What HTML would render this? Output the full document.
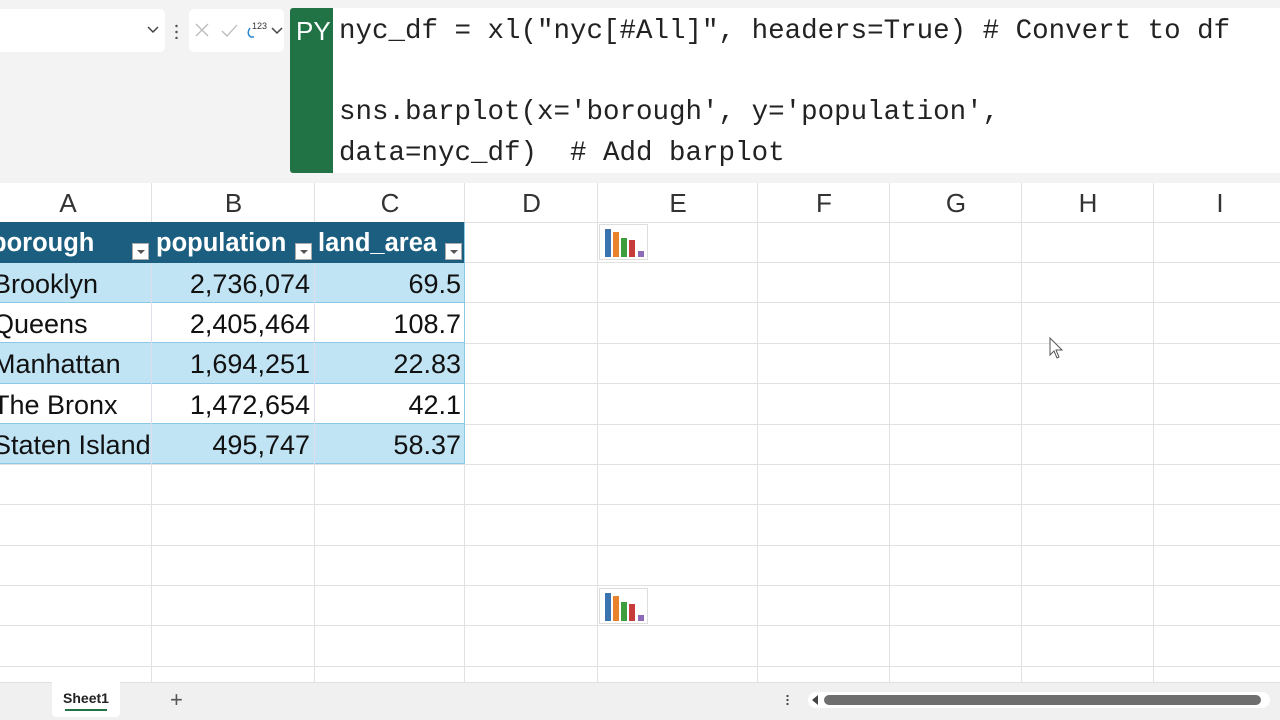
<!DOCTYPE html>
<html><head><meta charset="utf-8"><style>
*{margin:0;padding:0;box-sizing:border-box}
body{width:1280px;height:720px;overflow:hidden;background:#fff;font-family:"Liberation Sans",sans-serif;position:relative}
.top{position:absolute;left:0;top:0;width:1280px;height:183px;background:#f3f3f3}
.abs{position:absolute}
.code{position:absolute;left:333px;top:8px;width:947px;height:165px;background:#fff;font-family:"Liberation Mono",monospace;font-size:27.5px;color:#222;padding:4px 0 0 6px;line-height:40.5px;white-space:pre}
.hdr{position:absolute;top:183px;height:39px;font-size:26px;color:#333;text-align:center;line-height:40px}
.vl{position:absolute;top:183px;height:499px;width:1px;background:#e1e1e1}
.hl{position:absolute;left:0;width:1280px;height:1px;background:#e1e1e1}
.cell{position:absolute;height:40px;font-size:27px;line-height:41px;color:#111;white-space:nowrap;overflow:hidden}
.dd{position:absolute;width:17px;height:17px;background:#fff;border:1px solid #aaa;top:243px}
.dd:after{content:"";position:absolute;left:4px;top:6px;border-left:4px solid transparent;border-right:4px solid transparent;border-top:4px solid #555}
</style></head><body>
<div class="top"></div>
<div class="abs" style="left:0;top:9px;width:165px;height:43px;background:#fff;border-radius:0 5px 5px 0"></div>
<svg class="abs" style="left:146px;top:25px" width="14" height="10"><path d="M2 2 L7 7 L12 2" fill="none" stroke="#444" stroke-width="1.5"/></svg>
<div class="abs" style="left:175px;top:23px;width:3px;height:16px;background:radial-gradient(circle,#555 1px,transparent 1.5px) 0 0/3px 6px"></div>
<div class="abs" style="left:189px;top:9px;width:95px;height:43px;background:#fff;border-radius:5px"></div>
<svg class="abs" style="left:192px;top:20px" width="95" height="24"><path d="M4 4 L16 16 M16 4 L4 16" stroke="#bbb" stroke-width="1.3"/><path d="M30 11 L35 16 L45 5" fill="none" stroke="#bbb" stroke-width="1.3"/><path d="M58 8 Q54 14 59 17 L62 17" fill="none" stroke="#2a86d1" stroke-width="1.5"/><text x="60" y="9" font-size="9" fill="#333" font-family="Liberation Sans">123</text><path d="M80 8 L85 13 L90 8" fill="none" stroke="#444" stroke-width="1.5"/></svg>
<div class="abs" style="left:290px;top:8px;width:43px;height:165px;background:#217346;border-radius:3px 0 0 3px;color:#fff;font-size:26px;padding:8px 0 0 6px">PY</div>
<div class="code">nyc_df = xl("nyc[#All]", headers=True) # Convert to df

sns.barplot(x='borough', y='population',
data=nyc_df)  # Add barplot</div>

<div class="hdr" style="left:0;width:136px">A</div>
<div class="hdr" style="left:152px;width:163px">B</div>
<div class="hdr" style="left:315px;width:150px">C</div>
<div class="hdr" style="left:465px;width:133px">D</div>
<div class="hdr" style="left:598px;width:160px">E</div>
<div class="hdr" style="left:758px;width:132px">F</div>
<div class="hdr" style="left:890px;width:132px">G</div>
<div class="hdr" style="left:1022px;width:132px">H</div>
<div class="hdr" style="left:1154px;width:132px">I</div>

<div class="vl" style="left:151px"></div><div class="vl" style="left:314px"></div><div class="vl" style="left:464px"></div><div class="vl" style="left:597px"></div><div class="vl" style="left:757px"></div><div class="vl" style="left:889px"></div><div class="vl" style="left:1021px"></div><div class="vl" style="left:1153px"></div>
<div class="hl" style="top:222px"></div><div class="hl" style="top:262px"></div><div class="hl" style="top:302px"></div><div class="hl" style="top:343px"></div><div class="hl" style="top:383px"></div><div class="hl" style="top:424px"></div><div class="hl" style="top:464px"></div><div class="hl" style="top:504px"></div><div class="hl" style="top:545px"></div><div class="hl" style="top:585px"></div><div class="hl" style="top:625px"></div><div class="hl" style="top:666px"></div>

<div class="abs" style="left:0;top:222px;width:465px;height:41px;background:#1b5e80"></div>
<div class="abs" style="left:0;top:263px;width:465px;height:40px;background:#c1e4f5;border-bottom:1px solid #8cc7e6"></div>
<div class="abs" style="left:0;top:303px;width:465px;height:40px;background:#fff;border-bottom:1px solid #8cc7e6"></div>
<div class="abs" style="left:0;top:343px;width:465px;height:41px;background:#c1e4f5;border-bottom:1px solid #8cc7e6"></div>
<div class="abs" style="left:0;top:384px;width:465px;height:40px;background:#fff;border-bottom:1px solid #8cc7e6"></div>
<div class="abs" style="left:0;top:424px;width:465px;height:40px;background:#c1e4f5;border-bottom:1px solid #8cc7e6"></div>
<div class="abs" style="left:464px;top:222px;width:1px;height:242px;background:#8cc7e6"></div>
<div class="abs" style="left:151px;top:263px;width:1px;height:201px;background:#dde"></div><div class="abs" style="left:314px;top:263px;width:1px;height:201px;background:#dde"></div>
<div class="cell" style="left:-9px;top:223px;color:#fff;font-weight:bold;font-size:25.5px">borough</div>
<div class="cell" style="left:156px;top:223px;color:#fff;font-weight:bold;font-size:25.5px">population</div>
<div class="cell" style="left:318px;top:223px;color:#fff;font-weight:bold;font-size:25.5px">land_area</div>
<div class="dd" style="left:132px"></div><div class="dd" style="left:295px"></div><div class="dd" style="left:445px"></div>
<div class="cell" style="left:-7px;top:264px">Brooklyn</div><div class="cell" style="left:152px;width:158px;text-align:right;top:264px">2,736,074</div><div class="cell" style="left:315px;width:146px;text-align:right;top:264px">69.5</div>
<div class="cell" style="left:-7px;top:304px">Queens</div><div class="cell" style="left:152px;width:158px;text-align:right;top:304px">2,405,464</div><div class="cell" style="left:315px;width:146px;text-align:right;top:304px">108.7</div>
<div class="cell" style="left:-7px;top:344px">Manhattan</div><div class="cell" style="left:152px;width:158px;text-align:right;top:344px">1,694,251</div><div class="cell" style="left:315px;width:146px;text-align:right;top:344px">22.83</div>
<div class="cell" style="left:-7px;top:385px">The Bronx</div><div class="cell" style="left:152px;width:158px;text-align:right;top:385px">1,472,654</div><div class="cell" style="left:315px;width:146px;text-align:right;top:385px">42.1</div>
<div class="cell" style="left:-7px;top:425px">Staten Island</div><div class="cell" style="left:152px;width:158px;text-align:right;top:425px">495,747</div><div class="cell" style="left:315px;width:146px;text-align:right;top:425px">58.37</div>

<svg class="abs" style="left:599px;top:224px" width="49" height="36"><rect x="0.5" y="0.5" width="48" height="35" fill="#fff" stroke="#ddd"/><rect x="6" y="5" width="6" height="28" fill="#3a74b0"/><rect x="14" y="8" width="6" height="25" fill="#e8832b"/><rect x="22" y="14" width="6" height="19" fill="#3e9e3e"/><rect x="30" y="16" width="6" height="17" fill="#c83b3b"/><rect x="39" y="27" width="6" height="6" fill="#8e6bb8"/></svg>
<svg class="abs" style="left:599px;top:588px" width="49" height="36"><rect x="0.5" y="0.5" width="48" height="35" fill="#fff" stroke="#ddd"/><rect x="6" y="5" width="6" height="28" fill="#3a74b0"/><rect x="14" y="8" width="6" height="25" fill="#e8832b"/><rect x="22" y="14" width="6" height="19" fill="#3e9e3e"/><rect x="30" y="16" width="6" height="17" fill="#c83b3b"/><rect x="39" y="27" width="6" height="6" fill="#8e6bb8"/></svg>
<svg class="abs" style="left:1049px;top:337px" width="16" height="24"><path d="M1 1 L1 18 L5 14 L8 21 L10 20 L7 13 L13 13 Z" fill="#fff" stroke="#555"/></svg>

<div class="abs" style="left:0;top:682px;width:1280px;height:38px;background:#f0f0f0;border-top:1px solid #e0e0e0"></div>
<div class="abs" style="left:52px;top:682px;width:68px;height:35px;background:#fff;border-radius:0 0 4px 4px;font-size:14px;font-weight:bold;color:#222;text-align:center;padding-top:8px">Sheet1<div style="margin:3px auto 0;width:42px;height:2px;background:#217346"></div></div>
<div class="abs" style="left:170px;top:687px;font-size:22px;color:#555">+</div>
<div class="abs" style="left:786px;top:694px;width:3px;height:12px;background:radial-gradient(circle,#444 1px,transparent 1.3px) 0 0/3px 4px"></div>
<div class="abs" style="left:808px;top:692px;width:462px;height:16px;background:#fff;border-radius:8px"></div>
<svg class="abs" style="left:811px;top:695px" width="8" height="10"><path d="M7 0 L1 5 L7 10 Z" fill="#444"/></svg>
<div class="abs" style="left:824px;top:695px;width:437px;height:10px;background:#6e6e6e;border-radius:5px"></div>
</body></html>
